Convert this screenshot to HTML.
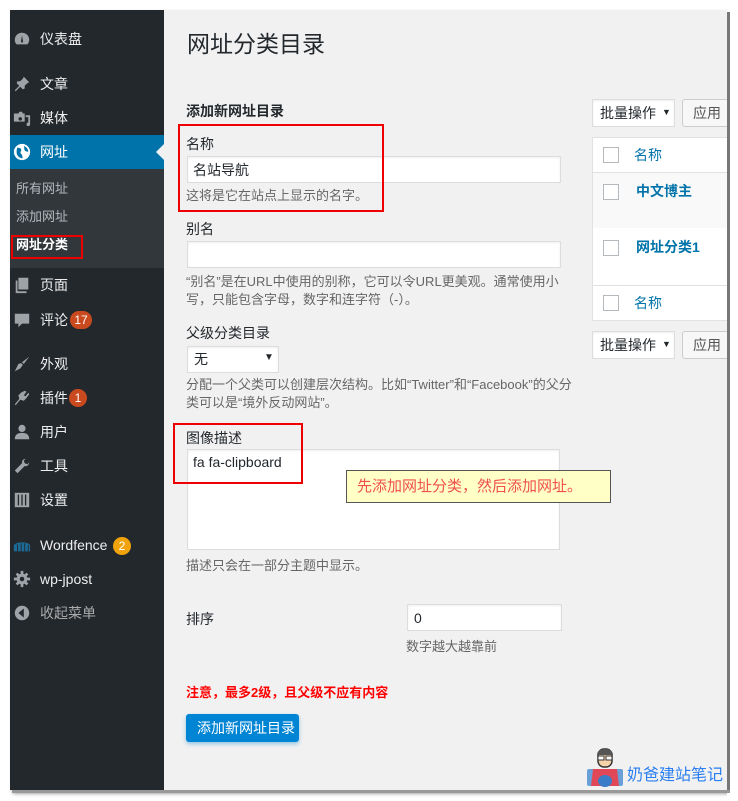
<!DOCTYPE html>
<html><head><meta charset="utf-8">
<style>
*{margin:0;padding:0;box-sizing:border-box}
body{width:738px;height:801px;background:#fff;position:relative;overflow:hidden;font-family:"Liberation Sans","Noto Sans CJK SC",sans-serif;font-size:14px;color:#23282d}
.a{position:absolute}
.t{position:absolute;white-space:nowrap;line-height:1}
#frame{left:10px;top:10px;width:717px;height:780px;background:#f1f1f1;box-shadow:3px 3px 4px rgba(0,0,0,.55)}
#side{left:10px;top:10px;width:154px;height:780px;background:#23282d}
.m{color:#eee;font-size:14px;left:40px}
.ic{position:absolute;left:13px;width:18px;height:18px}
.inp{position:absolute;background:#fff;border:1px solid #ddd;box-shadow:inset 0 1px 2px rgba(0,0,0,.07)}
.desc{color:#666;font-size:13px}
.cb{position:absolute;width:16px;height:16px;border:1px solid #b4b9be;background:#fff}
.red{position:absolute;border:2px solid #e00}
.badge{position:absolute;border-radius:10px;color:#fff;font-size:12px;text-align:center;height:18px;line-height:18px}
</style></head><body>
<div class="a" id="frame"></div>
<div class="a" id="side"></div>
<!-- sidebar -->
<svg class="ic" style="top:30px" viewBox="0 0 20 20"><path d="M10 3a8 8 0 0 0-8 8c0 2 .7 3.7 2 5h12a8 8 0 0 0 2-5 8 8 0 0 0-8-8zm0 3l1 6a1.2 1.2 0 1 1-2 0z" fill="#9ea3a8"/></svg>
<div class="t m" style="top:32px">仪表盘</div>
<svg class="ic" style="top:75px" viewBox="0 0 20 20"><path d="M12 2l6 6-2 1-3 3 0 3-2 1-3-3-5 5-1-1 5-5-3-3 1-2h3l3-3z" fill="#9ea3a8"/></svg>
<div class="t m" style="top:77px">文章</div>
<svg class="ic" style="top:109px" viewBox="0 0 20 20"><path d="M1 5h5l1-2h3l1 2h2v9H1zM8 9a2 2 0 1 0 .1 0zM14 7h5v10a2 2 0 1 1-2-2V9h-3z" fill="#9ea3a8"/></svg>
<div class="t m" style="top:111px">媒体</div>
<div class="a" style="left:10px;top:135px;width:154px;height:34px;background:#0073aa"></div>
<div class="a" style="left:156px;top:144px;width:0;height:0;border-top:8px solid transparent;border-bottom:8px solid transparent;border-right:8px solid #f1f1f1"></div>
<svg class="ic" style="top:143px" viewBox="0 0 20 20"><circle cx="10" cy="10" r="9" fill="#fff"/><path d="M5 5c2 1 3 0 4 2s-2 3 0 5 1 4 2 5c-4 0-7-3-7-7 0-2 0-3 1-5zM12 3c2 1 5 3 5 7-1-1-3 0-4-2s0-3-1-5z" fill="#0073aa"/></svg>
<div class="t m" style="top:145px;color:#fff">网址</div>
<div class="a" style="left:10px;top:169px;width:154px;height:99px;background:#32373c"></div>
<div class="t" style="left:16px;top:182px;color:#b4b9be;font-size:13px">所有网址</div>
<div class="t" style="left:16px;top:210px;color:#b4b9be;font-size:13px">添加网址</div>
<div class="t" style="left:16px;top:238px;color:#fff;font-size:13px;font-weight:bold">网址分类</div>
<div class="red" style="left:11px;top:235px;width:72px;height:24px"></div>
<svg class="ic" style="top:276px" viewBox="0 0 20 20"><path d="M6 2h11v13H6zM3 5h2v12h10v2H3z" fill="#9ea3a8"/></svg>
<div class="t m" style="top:278px">页面</div>
<svg class="ic" style="top:311px" viewBox="0 0 20 20"><path d="M2 3h16v11h-8l-4 4v-4H2z" fill="#9ea3a8"/></svg>
<div class="t m" style="top:313px">评论</div>
<div class="badge" style="left:70px;top:311px;width:22px;background:#ca4a1f">17</div>
<svg class="ic" style="top:355px" viewBox="0 0 20 20"><path d="M18 2l-8 6 2 2 6-8zM9 9l-3 1-4 8 6-3 3-4z" fill="#9ea3a8"/></svg>
<div class="t m" style="top:357px">外观</div>
<svg class="ic" style="top:389px" viewBox="0 0 20 20"><path d="M13 2l2 1-3 4 2 1 3-4 1 2-3 4-3 3-4-1-5 6-1-1 5-6-1-4 3-3z" fill="#9ea3a8"/></svg>
<div class="t m" style="top:391px">插件</div>
<div class="badge" style="left:69px;top:389px;width:18px;background:#ca4a1f">1</div>
<svg class="ic" style="top:423px" viewBox="0 0 20 20"><circle cx="10" cy="6" r="4" fill="#9ea3a8"/><path d="M2 18c0-5 3-7 8-7s8 2 8 7z" fill="#9ea3a8"/></svg>
<div class="t m" style="top:425px">用户</div>
<svg class="ic" style="top:457px" viewBox="0 0 20 20"><path d="M14 2a4 4 0 0 0-4 5L2 15l3 3 8-8a4 4 0 0 0 5-4l-2 2-3-1-1-3z" fill="#9ea3a8"/></svg>
<div class="t m" style="top:459px">工具</div>
<svg class="ic" style="top:491px" viewBox="0 0 20 20"><path d="M2 2h16v16H2z" fill="#9ea3a8"/><path d="M6 4v12M10 4v12M14 4v12" stroke="#23282d" stroke-width="1.5"/></svg>
<div class="t m" style="top:493px">设置</div>
<svg class="ic" style="top:537px" viewBox="0 0 20 20"><path d="M1 9c3-4 15-4 18 0v7H1z" fill="#1c6a96"/><path d="M5 8v8M9 7v9M13 7v9M17 9v7" stroke="#23282d"/></svg>
<div class="t m" style="top:538px">Wordfence</div>
<div class="badge" style="left:113px;top:537px;width:18px;background:#f0a30a">2</div>
<svg class="ic" style="top:570px" viewBox="0 0 20 20"><circle cx="10" cy="10" r="6" fill="#9ea3a8"/><path d="M10 1v18M1 10h18M4 4l12 12M16 4L4 16" stroke="#9ea3a8" stroke-width="3"/><circle cx="10" cy="10" r="2.5" fill="#23282d"/></svg>
<div class="t m" style="top:572px">wp-jpost</div>
<svg class="ic" style="top:604px" viewBox="0 0 20 20"><circle cx="10" cy="10" r="8" fill="#9ea3a8"/><path d="M12 5v10l-6-5z" fill="#23282d"/></svg>
<div class="t m" style="top:606px;color:#aaa">收起菜单</div>

<!-- main -->
<div class="t" style="left:187px;top:33px;font-size:23px;color:#23282d">网址分类目录</div>
<div class="t" style="left:186px;top:104px;font-weight:bold;font-size:14px">添加新网址目录</div>
<div class="t" style="left:186px;top:137px">名称</div>
<div class="inp" style="left:187px;top:156px;width:374px;height:27px"></div>
<div class="t" style="left:193px;top:163px">名站导航</div>
<div class="t desc" style="left:186px;top:189px">这将是它在站点上显示的名字。</div>
<div class="red" style="left:178px;top:124px;width:206px;height:88px"></div>
<div class="t" style="left:186px;top:222px">别名</div>
<div class="inp" style="left:187px;top:241px;width:374px;height:27px"></div>
<div class="t desc" style="left:186px;top:275px">“别名”是在URL中使用的别称，它可以令URL更美观。通常使用小</div>
<div class="t desc" style="left:186px;top:293px">写，只能包含字母，数字和连字符（-）。</div>
<div class="t" style="left:186px;top:326px">父级分类目录</div>
<div class="inp" style="left:187px;top:346px;width:92px;height:27px"></div>
<div class="t" style="left:194px;top:352px">无</div>
<div class="t" style="left:264px;top:353px;font-size:10px">▼</div>
<div class="t desc" style="left:186px;top:378px">分配一个父类可以创建层次结构。比如“Twitter”和“Facebook”的父分</div>
<div class="t desc" style="left:186px;top:396px">类可以是“境外反动网站”。</div>
<div class="t" style="left:186px;top:431px">图像描述</div>
<div class="inp" style="left:187px;top:449px;width:373px;height:101px"></div>
<div class="t" style="left:193px;top:455px">fa fa-clipboard</div>
<div class="red" style="left:173px;top:423px;width:130px;height:61px"></div>
<div class="a" style="left:346px;top:470px;width:265px;height:33px;background:#ffffc6;border:1px solid #555"></div>
<div class="t" style="left:357px;top:479px;font-size:15px;color:#f05050">先添加网址分类，然后添加网址。</div>
<div class="t desc" style="left:186px;top:559px">描述只会在一部分主题中显示。</div>
<div class="t" style="left:186px;top:612px">排序</div>
<div class="inp" style="left:407px;top:604px;width:155px;height:27px"></div>
<div class="t" style="left:414px;top:611px">0</div>
<div class="t desc" style="left:406px;top:640px">数字越大越靠前</div>
<div class="t" style="left:186px;top:686px;color:#f00;font-weight:bold;font-size:13px">注意，最多2级，且父级不应有内容</div>
<div class="a" style="left:186px;top:714px;width:113px;height:28px;background:#0085d5;border-radius:3px;box-shadow:0 2px 4px rgba(0,133,213,.4)"></div>
<div class="t" style="left:197px;top:721px;color:#fff;font-size:14px">添加新网址目录</div>

<!-- right -->
<div class="inp" style="left:592px;top:99px;width:83px;height:28px"></div>
<div class="t" style="left:600px;top:106px">批量操作</div>
<div class="t" style="left:662px;top:108px;font-size:9px">▼</div>
<div class="a" style="left:682px;top:99px;width:50px;height:28px;background:#f7f7f7;border:1px solid #ccc;border-radius:3px"></div>
<div class="t" style="left:693px;top:106px;color:#555">应用</div>
<div class="a" style="left:592px;top:137px;width:135px;height:184px;background:#fff;border:1px solid #e1e1e1;border-right:none"></div>
<div class="a" style="left:593px;top:172px;width:134px;height:56px;background:#f9f9f9;border-top:1px solid #e1e1e1"></div>
<div class="a" style="left:593px;top:285px;width:134px;height:1px;background:#e1e1e1"></div>
<div class="cb" style="left:603px;top:147px"></div>
<div class="t" style="left:634px;top:148px;color:#0073aa">名称</div>
<div class="cb" style="left:603px;top:184px"></div>
<div class="t" style="left:636px;top:184px;color:#0073aa;font-weight:bold">中文博主</div>
<div class="cb" style="left:603px;top:240px"></div>
<div class="t" style="left:636px;top:240px;color:#0073aa;font-weight:bold">网址分类1</div>
<div class="cb" style="left:603px;top:295px"></div>
<div class="t" style="left:634px;top:296px;color:#0073aa">名称</div>
<div class="inp" style="left:592px;top:331px;width:83px;height:28px"></div>
<div class="t" style="left:600px;top:338px">批量操作</div>
<div class="t" style="left:662px;top:340px;font-size:9px">▼</div>
<div class="a" style="left:682px;top:331px;width:50px;height:28px;background:#f7f7f7;border:1px solid #ccc;border-radius:3px"></div>
<div class="t" style="left:693px;top:338px;color:#555">应用</div>
<div class="a" style="left:727px;top:10px;width:11px;height:791px;background:#fff"></div>
<div class="a" style="left:727px;top:12px;width:3px;height:780px;background:#777"></div>
<div class="a" style="left:12px;top:790px;width:718px;height:3px;background:#999"></div>

<!-- logo -->
<svg class="a" style="left:585px;top:745px;width:40px;height:42px" viewBox="0 0 40 42">
<rect x="2" y="24" width="36" height="17" rx="2" fill="#6aa0d8"/>
<path d="M8 24h24l2 17H6z" fill="#e04858"/>
<ellipse cx="20" cy="36" rx="7" ry="6" fill="#3a7cc8"/>
<rect x="13" y="4" width="14" height="18" rx="6" fill="#f5d3a8" stroke="#333" stroke-width="1.5"/>
<path d="M12 10c0-8 16-8 16 0z" fill="#555"/>
<rect x="13" y="11" width="6" height="4" fill="#fff" stroke="#333"/><rect x="21" y="11" width="6" height="4" fill="#fff" stroke="#333"/>
</svg>
<div class="t" style="left:627px;top:768px;font-size:16px;color:#2a7ff0">奶爸建站笔记</div>
</body></html>
